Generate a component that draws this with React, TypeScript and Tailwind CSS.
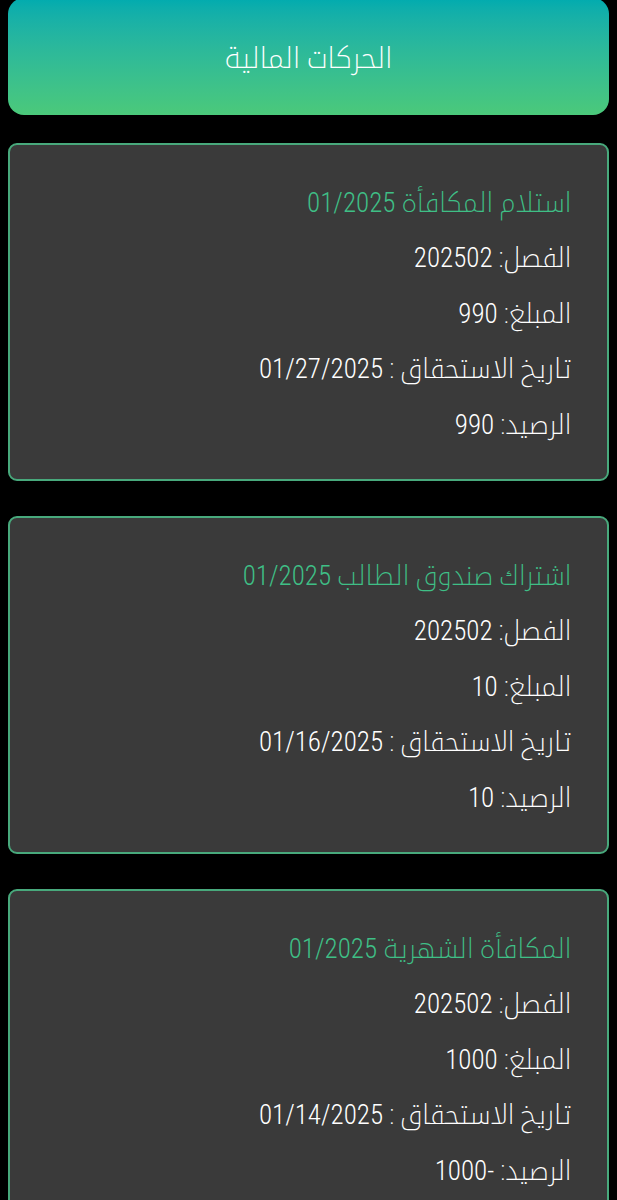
import React from "react";

const cards = [
  { title: "استلام المكافأة", period: "01/2025", term: "202502", amount: "990", date: "01/27/2025", balance: "990" },
  { title: "اشتراك صندوق الطالب", period: "01/2025", term: "202502", amount: "10", date: "01/16/2025", balance: "10" },
  { title: "المكافأة الشهرية", period: "01/2025", term: "202502", amount: "1000", date: "01/14/2025", balance: "-1000" },
];

const FONT = "'Roboto Condensed', 'Noto Kufi Arabic', 'Noto Sans Arabic', sans-serif";

export default function App() {
  return (
    <div dir="rtl" className="min-h-[1200px] bg-black px-2 text-white" style={{ fontFamily: FONT }}>
      <div className="-mt-[2px] flex h-[117px] items-center justify-center rounded-[16px] bg-gradient-to-b from-[#00abaf] to-[#4bc97a] pt-[2px]">
        <h1 className="text-[29px] font-extralight leading-[40px] text-white">الحركات المالية</h1>
      </div>
      <div className="mt-[28px] flex flex-col gap-[35px]">
        {cards.map((c, i) => (
          <div
            key={i}
            className="h-[338px] rounded-[9px] border-2 border-[#48a97c] bg-[#3a3a3a] pr-[35.5px] pt-[41.5px]"
          >
            <div className="flex flex-col gap-[23.5px] text-[27px] font-extralight leading-[32px]">
              <p className="text-[#3fbf86]">
                {c.title} <span className="font-light">{c.period}</span>
              </p>
              <p>
                الفصل: <span className="font-light">{c.term}</span>
              </p>
              <p>
                المبلغ: <span className="font-light">{c.amount}</span>
              </p>
              <p>
                تاريخ الاستحقاق : <span dir="ltr" className="font-light">{c.date}</span>
              </p>
              <p>
                الرصيد: <span className="font-light">{c.balance}</span>
              </p>
            </div>
          </div>
        ))}
      </div>
    </div>
  );
}
